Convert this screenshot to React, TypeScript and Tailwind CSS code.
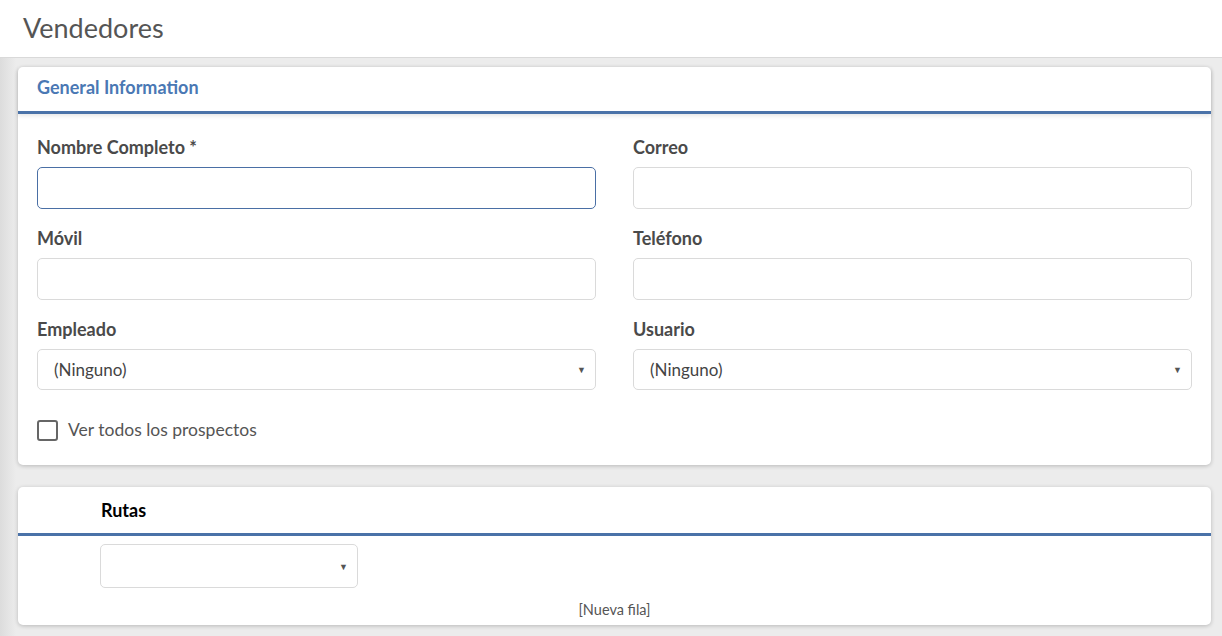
import { useState } from 'react';

const font = { fontFamily: 'Lato, "Open Sans", sans-serif' };

function Field({ label, focused }: { label: string; focused?: boolean }) {
    return (
        <div className="flex flex-col">
            <label className="text-[18px] font-bold text-[#4a4a4a] leading-5 mb-[10px]">{label}</label>
            <input
                className={`h-[42px] w-full rounded-[5px] border bg-white outline-none px-4 ${focused ? 'border-[#4a6fa5]' : 'border-[#dadada]'}`}
            />
        </div>
    );
}

function SelectField({ label, value }: { label: string; value: string }) {
    return (
        <div className="flex flex-col">
            <label className="text-[18px] font-bold text-[#4a4a4a] leading-5 mb-[10px]">{label}</label>
            <div className="h-[41px] w-full rounded-[5px] border border-[#dadada] bg-white flex items-center justify-between pl-4 pr-[9px]">
                <span className="text-[17px] text-[#444]">{value}</span>
                <span className="text-[9px] text-[#555]">▼</span>
            </div>
        </div>
    );
}

export default function App() {
    const [checked, setChecked] = useState(false);

    return (
        <div
            className="min-h-screen w-full bg-[#ececec] bg-[linear-gradient(to_right,#dcdcdc,#ececec_16px)] pb-[11px]"
            style={font}
        >
            {/* Page header */}
            <div className="h-[58px] bg-white border-b border-[#d9d9d9] flex items-center pl-[23px]">
                <h1 className="text-[27px] text-[#555] leading-none -mt-[2px]">Vendedores</h1>
            </div>

            {/* General Information */}
            <div className="ml-[18px] mr-[11px] mt-[9px] bg-white rounded-[5px] shadow-[0_1px_4px_rgba(0,0,0,0.22)]">
                <div className="h-[47px] flex items-center pl-[19px] pb-[4px] border-b-[3px] border-[#4a72a8] shadow-[0_2px_4px_rgba(0,0,0,0.1)]">
                    <h2 className="text-[18px] font-bold text-[#4a78b4]">General Information</h2>
                </div>
                <div className="px-[19px] pt-[23px] pb-[22px]">
                    <div className="grid grid-cols-2 gap-x-[37px] gap-y-[19px]">
                        <Field label="Nombre Completo *" focused />
                        <Field label="Correo" />
                        <Field label="Móvil" />
                        <Field label="Teléfono" />
                        <SelectField label="Empleado" value="(Ninguno)" />
                        <SelectField label="Usuario" value="(Ninguno)" />
                    </div>
                    <label className="flex items-center gap-[10px] mt-[27px] cursor-pointer w-fit">
                        <span
                            onClick={() => setChecked(!checked)}
                            className="w-[21px] h-[21px] rounded-[3px] border-2 border-[#666] bg-white flex items-center justify-center text-[13px] text-[#444]"
                        >
                            {checked ? '✓' : ''}
                        </span>
                        <span className="text-[17.5px] text-[#555]">Ver todos los prospectos</span>
                    </label>
                </div>
            </div>

            {/* Rutas */}
            <div className="ml-[18px] mr-[11px] mt-[22px] bg-white rounded-[5px] shadow-[0_1px_4px_rgba(0,0,0,0.22)]">
                <div className="h-[49px] flex items-center pl-[83px] border-b-[3px] border-[#4a72a8]">
                    <h2 className="text-[18px] font-bold text-black">Rutas</h2>
                </div>
                <div className="pt-[8px] pl-[82px]">
                    <div className="h-[44px] w-[258px] rounded-[5px] border border-[#dadada] bg-white flex items-center justify-end pr-[9px]">
                        <span className="text-[9px] text-[#555]">▼</span>
                    </div>
                </div>
                <div className="text-center text-[14.5px] text-[#555] pt-[12px] pb-[5px] leading-5">[Nueva fila]</div>
            </div>
        </div>
    );
}
